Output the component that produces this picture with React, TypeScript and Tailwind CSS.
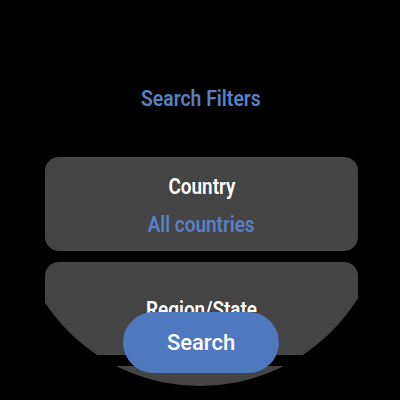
import React from "react";

export default function App() {
  const font = { fontFamily: "Roboto, 'Noto Sans', sans-serif" };
  return (
    <div className="w-[400px] h-[400px] bg-black overflow-hidden" style={font}>
      <div className="relative m-[14px] w-[372px] h-[372px] rounded-full overflow-hidden bg-black">
        <div className="flex flex-col pt-[73px]">
          <div className="h-[24px] leading-[24px] text-center text-[22px] font-semibold text-[#5a80c4] pl-[2px] scale-x-[0.88]">
            Search Filters
          </div>
          <div className="ml-[31px] mt-[46px] w-[313px] h-[94px] rounded-[14px] bg-[#444444] flex flex-col items-center pt-[17px]">
            <div className="leading-[26px] text-[22px] font-semibold text-white scale-x-[0.86]">Country</div>
            <div className="mt-[12px] leading-[26px] text-[22px] font-semibold text-[#5a80c4] scale-x-[0.86]">All countries</div>
          </div>
          <div className="ml-[31px] mt-[11px] w-[313px] h-[93px] rounded-t-[14px] bg-[#444444] flex flex-col items-center pt-[35px]">
            <div className="leading-[26px] text-[22px] font-semibold text-white scale-x-[0.86]">Region/State</div>
          </div>
          <div className="ml-[31px] mt-[11px] w-[313px] h-[94px] rounded-[14px] bg-[#444444]" />
        </div>
        <div className="absolute left-[109px] top-[298px] w-[156px] h-[61px] rounded-full bg-[#5078bf] flex items-center justify-center">
          <span className="text-[22px] font-medium text-white leading-none">Search</span>
        </div>
      </div>
    </div>
  );
}
